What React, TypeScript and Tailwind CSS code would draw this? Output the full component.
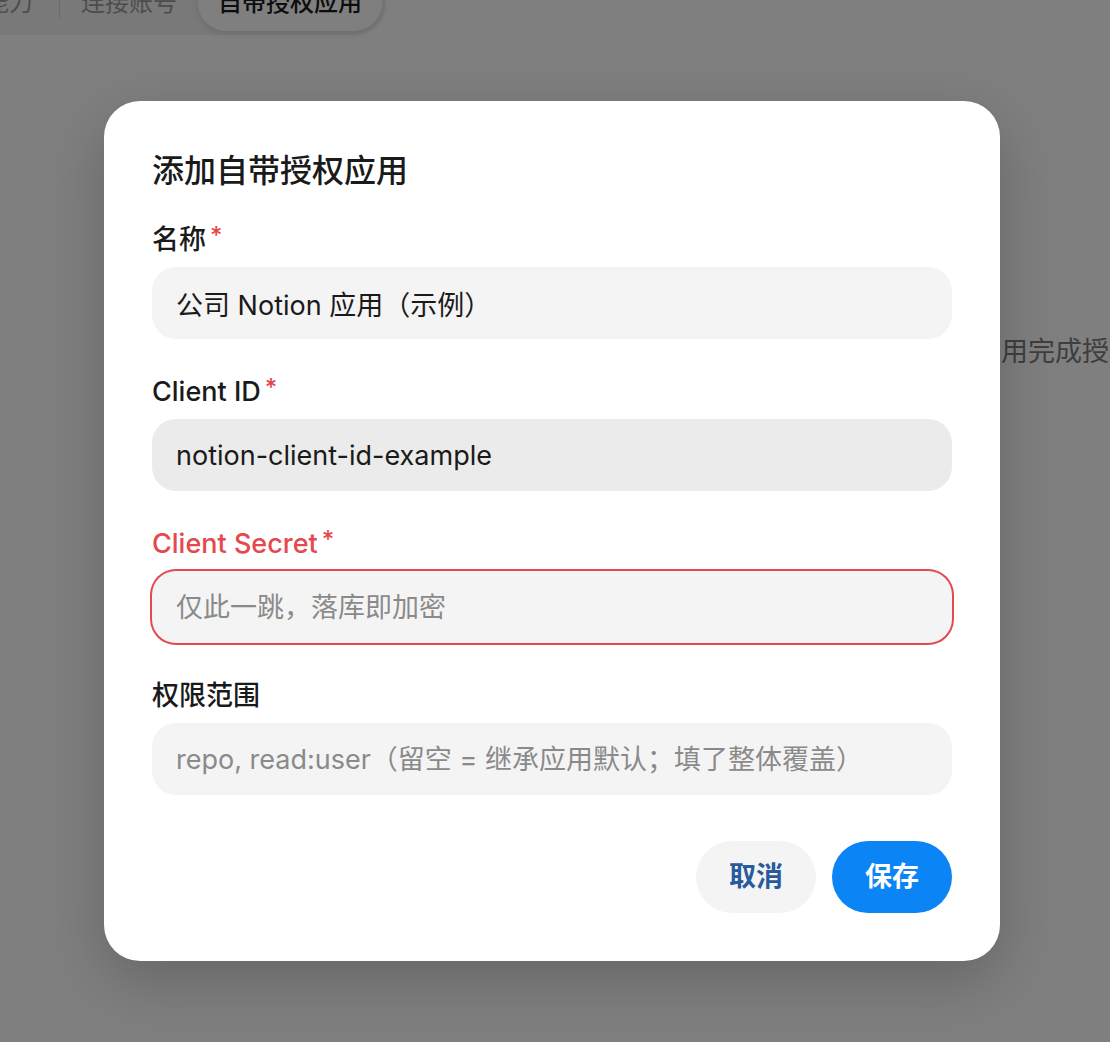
import React from 'react';

const font = "font-['Inter','Noto_Sans_CJK_SC',sans-serif]";

function Field({
  label,
  required,
  error,
  children,
}: {
  label: string;
  required?: boolean;
  error?: boolean;
  children: React.ReactNode;
}) {
  return (
    <div className="flex flex-col">
      <label
        className={`mb-[6px] flex items-start text-[27px] font-medium leading-[42px] ${
          error ? 'text-[#e5484d]' : 'text-[#1a1a1a]'
        }`}>
        {label}
        {required && <span className="ml-1 text-[24px] leading-[34px] text-[#e5484d]">*</span>}
      </label>
      {children}
    </div>
  );
}

export default function App() {
  return (
    <div className={`relative h-[1042px] w-full overflow-hidden bg-white ${font}`}>
      {/* page behind the dialog */}
      <div className="-ml-[45px] -mt-[29px] flex w-fit items-center rounded-full bg-[#f2f2f2] p-1">
        <span className="px-[26px] text-[24px] leading-[56px] text-[#9a9a9a]">能力</span>
        <span className="h-[30px] w-px bg-[#d6d6d6]" />
        <span className="px-[21px] text-[24px] leading-[56px] text-[#9a9a9a]">连接账号</span>
        <span className="rounded-full bg-white px-5 text-[24px] font-medium leading-[56px] text-[#1a1a1a] shadow-[0_2px_8px_rgba(0,0,0,0.12)]">
          自带授权应用
        </span>
      </div>
      <p className="mt-[299px] whitespace-nowrap pl-[461px] text-[27px] leading-[36px] text-[#7c7c7c]">
        选择自带授权应用后，将使用你自己的授权应用完成授权。
      </p>

      {/* overlay */}
      <div className="absolute inset-0 flex items-start bg-black/50 pl-[104px] pt-[101px]">
        <div className="w-[896px] rounded-[36px] bg-white p-12 shadow-[0_20px_60px_rgba(0,0,0,0.2)]">
          <h2 className="text-[32px] font-medium leading-[44px] text-[#1a1a1a]">添加自带授权应用</h2>

          <div className="mt-[26px] flex flex-col gap-8">
            <Field label="名称" required>
              <input
                readOnly
                defaultValue="公司 Notion 应用（示例）"
                className="h-[72px] w-full rounded-[24px] bg-[#f4f4f4] px-6 text-[27px] text-[#1a1a1a] outline-none"
              />
            </Field>
            <Field label="Client ID" required>
              <input
                readOnly
                defaultValue="notion-client-id-example"
                className="h-[72px] w-full rounded-[24px] bg-[#ebebeb] px-6 text-[27px] text-[#1a1a1a] outline-none"
              />
            </Field>
            <Field label="Client Secret" required error>
              <input
                readOnly
                placeholder="仅此一跳，落库即加密"
                className="h-[72px] w-full rounded-[24px] bg-[#f4f4f4] px-6 text-[27px] text-[#1a1a1a] outline-none ring-2 ring-[#e5484d] placeholder:text-[#8a8a8a]"
              />
            </Field>
            <Field label="权限范围">
              <input
                readOnly
                placeholder="repo, read:user（留空 = 继承应用默认；填了整体覆盖）"
                className="h-[72px] w-full rounded-[24px] bg-[#f4f4f4] px-6 text-[27px] text-[#1a1a1a] outline-none placeholder:text-[#8a8a8a]"
              />
            </Field>
          </div>

          <div className="mt-[46px] flex justify-end gap-4">
            <button
              type="button"
              className="h-[72px] w-[120px] rounded-full bg-[#f4f4f4] text-[27px] font-semibold text-[#285a9c]">
              取消
            </button>
            <button
              type="button"
              className="h-[72px] w-[120px] rounded-full bg-[#0b84f5] text-[27px] font-semibold text-white">
              保存
            </button>
          </div>
        </div>
      </div>
    </div>
  );
}
